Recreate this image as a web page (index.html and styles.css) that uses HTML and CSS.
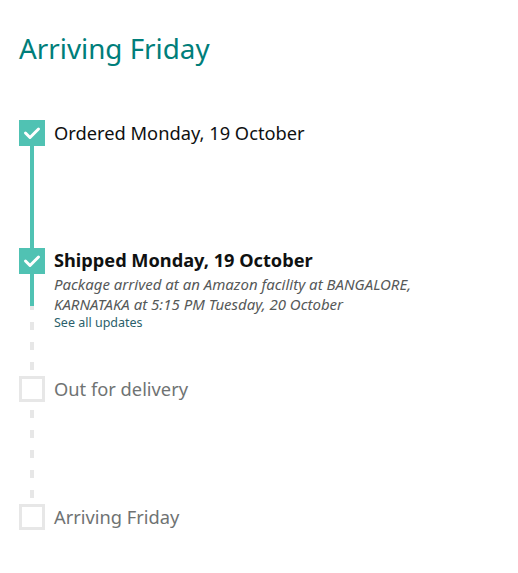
FILE: index.html
```html
<!DOCTYPE html>
<html>
<head>
<meta charset="utf-8">
<link rel="stylesheet" href="styles.css">
</head>
<body>
<div class="tracker">
  <h1 class="title">Arriving Friday</h1>
  <ol class="steps">
    <li class="step done">
      <div class="rail">
        <span class="box"><svg viewBox="0 0 26 26" width="26" height="26"><path d="M6.5 13 L11 17.5 L19.5 9" fill="none" stroke="#fff" stroke-width="3" stroke-linecap="round" stroke-linejoin="round"/></svg></span>
        <span class="line solid"></span>
      </div>
      <div class="info">
        <div class="label">Ordered Monday, 19 October</div>
      </div>
    </li>
    <li class="step done current">
      <div class="rail">
        <span class="box"><svg viewBox="0 0 26 26" width="26" height="26"><path d="M6.5 13 L11 17.5 L19.5 9" fill="none" stroke="#fff" stroke-width="3" stroke-linecap="round" stroke-linejoin="round"/></svg></span>
        <span class="line dashed"><span class="progress"></span></span>
      </div>
      <div class="info">
        <div class="label bold">Shipped Monday, 19 October</div>
        <div class="desc">Package arrived at an Amazon facility at BANGALORE, KARNATAKA at 5:15 PM Tuesday, 20 October</div>
        <a class="updates" href="#">See all updates</a>
      </div>
    </li>
    <li class="step pending">
      <div class="rail">
        <span class="box"></span>
        <span class="line dashed"></span>
      </div>
      <div class="info">
        <div class="label">Out for delivery</div>
      </div>
    </li>
    <li class="step pending last">
      <div class="rail">
        <span class="box"></span>
      </div>
      <div class="info">
        <div class="label">Arriving Friday</div>
      </div>
    </li>
  </ol>
</div>
</body>
</html>
```

FILE: styles.css
```css
html, body {
  margin: 0;
  padding: 0;
  background: #fff;
}
body {
  font-family: "Noto Sans", "Open Sans", sans-serif;
  color: #0f1111;
}
.tracker {
  padding: 28px 0 0 19px;
}
.title {
  margin: 0;
  font-size: 27.8px;
  font-weight: 400;
  line-height: 40px;
  color: #007e7a;
}
.steps {
  list-style: none;
  margin: 52px 0 0 0;
  padding: 0;
}
.step {
  display: flex;
  gap: 9px;
  height: 128px;
}
.step.last {
  height: 40px;
}
.rail {
  width: 26px;
  display: flex;
  flex-direction: column;
  align-items: center;
  flex-shrink: 0;
}
.box {
  width: 26px;
  height: 26px;
  box-sizing: border-box;
  flex-shrink: 0;
  display: block;
}
.box svg {
  display: block;
}
.done .box {
  background: #50c2b3;
}
.pending .box {
  border: 3px solid #e7e7e7;
}
.line {
  width: 4px;
  flex: 1;
  position: relative;
}
.line.solid {
  background: #50c2b3;
}
.line.dashed {
  background: repeating-linear-gradient(to bottom, transparent 0, transparent 8px, #e7e7e7 8px, #e7e7e7 16px, transparent 16px, transparent 20px);
}
.progress {
  position: absolute;
  left: 0;
  top: 0;
  width: 4px;
  height: 32px;
  background: #50c2b3;
}
.label {
  font-size: 18.3px;
  line-height: 25px;
  color: #0f1111;
}
.label.bold {
  font-weight: 700;
  font-size: 18.2px;
}
.pending .label {
  color: #6f7373;
}
.desc {
  font-size: 15px;
  font-style: italic;
  line-height: 20px;
  color: #565959;
  width: 400px;
  margin-top: 1px;
}
.updates {
  display: block;
  font-size: 12.5px;
  line-height: 18px;
  color: #2b5f6b;
  text-decoration: none;
}
```
